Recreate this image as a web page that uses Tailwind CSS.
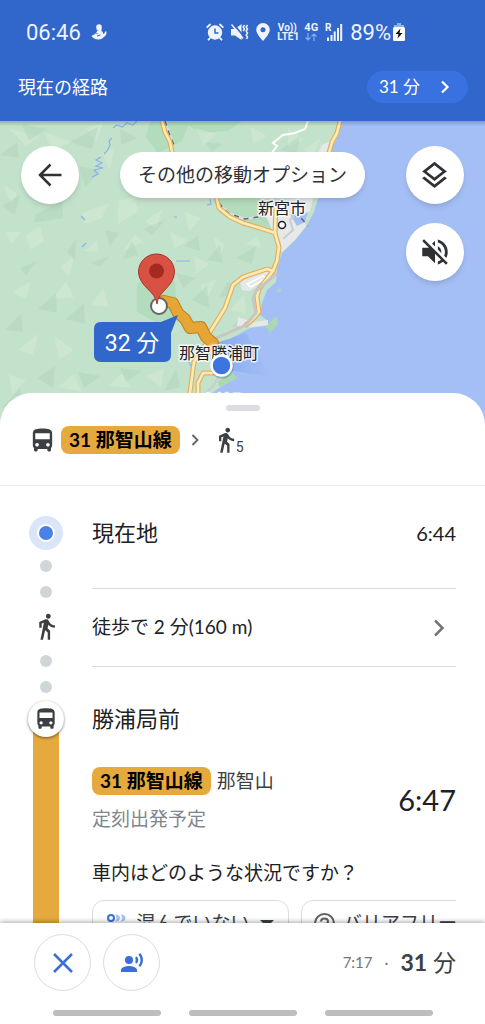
<!DOCTYPE html>
<html lang="ja">
<head>
  <meta charset="UTF-8">
  <meta name="viewport" content="width=device-width, initial-scale=1">
  <title>現在の経路</title>
  <script src="https://cdn.jsdelivr.net/npm/@tailwindcss/browser@4"></script>
</head>
<body class="h-screen flex flex-col overflow-hidden bg-white text-[#202124] font-['Lato','Noto_Sans_CJK_JP',sans-serif]">

  <!-- ENCABEZADO -->
  <header class="shrink-0 bg-[#3166cb] text-white">
    <div class="flex h-16 items-center justify-between pl-[26px] pr-20 font-['Roboto',sans-serif] text-[#eef3ff]">
      <div class="flex items-center gap-2.5">
        <span class="text-[22px]">06:46</span>
        <svg class="size-4" viewBox="0 0 16 16" fill="currentColor"><circle cx="8" cy="3" r="2.8"/><path d="M5.500 4h5v3q2 1 1.500 3 2-.5 2-2.500h1.500q.3 3.500-2.500 5.500Q10 16 7 15.500 3.500 15.500.5 12.500q1-2 3-2L6 7z"/><path d="M6.500 6L4 8.800l2.500.7M6 12l3.500-1" stroke="#3166cb" stroke-width="1" fill="none"/></svg>
      </div>
      <div class="flex items-center gap-[7px]">
        <svg class="size-[18px]" viewBox="0 0 18 18" fill="none" stroke="currentColor" stroke-width="1.800" stroke-linecap="round"><circle cx="9" cy="9.500" r="6.300" fill="currentColor"/><path d="M1.200 4.200L4 1.500M14 1.500l2.800 2.700M4 15l-1.500 1.700M14 15l1.500 1.700"/><path d="M9 6v4h3" stroke="#3166cb" stroke-width="1.500"/></svg>
        <svg class="size-[18px]" viewBox="0 0 18 18" fill="currentColor"><path d="M0 6h4l6.500-5v16L4 12.500H0z"/><path d="M1.500 0l11 13" stroke="#3166cb" stroke-width="1.800"/><path d="M.5 1.500l11.500 14" stroke="currentColor" stroke-width="1.500"/><path d="M13.500 2L12.200 4l1.300 2-1.300 2M16.500 2l-1.300 2 1.300 2-1.300 2 1.300 2-1.300 2 1.300 2-1 2" stroke="currentColor" stroke-width="1.500" fill="none"/></svg>
        <svg class="h-[18px] w-3.5" viewBox="0 0 14 18" fill="currentColor" fill-rule="evenodd"><path d="M7 0a6.800 6.800 0 0 0-6.800 6.800C.2 11 7 18 7 18s6.800-7 6.800-11.200A6.800 6.800 0 0 0 7 0zm0 4.200a2.500 2.500 0 1 1 0 5 2.500 2.500 0 0 1 0-5z"/></svg>
        <span class="flex w-5 flex-col text-center text-[10px] font-bold leading-[9px]"><span>Vo))</span><span>LTE1</span></span>
        <span class="flex flex-col items-center text-[11px] font-bold leading-[10px]">4G
          <svg class="h-2 w-3" viewBox="0 0 12 8" fill="none" stroke="#88aaf0" stroke-width="1.200"><path d="M3 0v7M.5 4.500L3 7l2.500-2.500M9 8V1M6.500 3.500L9 1l2.500 2.500"/></svg>
        </span>
        <svg class="h-[18px] w-[18px]" viewBox="0 0 18 18" fill="currentColor"><path d="M2 14.500h2V18H2zM5.500 12h2v6h-2zM8.700 8.500h2V18h-2zM12 5h2v13h-2zM15.200 1h2v17h-2z"/><text x="0" y="8" font-size="10" font-weight="700">R</text></svg>
        <span class="flex items-center gap-0.5 text-[22px]">89%
          <svg class="h-[18px] w-3" viewBox="0 0 12 18"><path d="M4 0h4v2h3v4H1V2h3z" fill="#91aef0"/><rect y="4" width="12" height="14" rx="1.500" fill="#fff"/><path d="M7.500 5.500L2.500 11h3l-1 4.500L9.500 10h-3z" fill="#111"/></svg>
        </span>
      </div>
    </div>
    <div class="flex h-[57px] items-start justify-between pl-[18px] pr-[17px] pt-[7px]">
      <h1 class="text-lg leading-8">現在の経路</h1>
      <button type="button" class="flex h-8 w-[101px] items-center justify-between rounded-full bg-[#3971e1] pl-3 pr-4 text-[17px]">
        <span>31 分</span>
        <svg class="size-3.5" viewBox="0 0 14 14" fill="none" stroke="currentColor" stroke-width="2.200"><path d="M4 1.500L9.500 7 4 12.500"/></svg>
      </button>
    </div>
  </header>

  <!-- MAPA -->
  <section class="relative -mb-8 h-[304px] shrink-0 overflow-hidden bg-[#a4bff5]">
    <svg class="h-full w-full" viewBox="0 121 485 304" preserveAspectRatio="xMidYMin slice">
      <defs>
        <linearGradient id="haz" x1="0" x2="1"><stop offset="0" stop-color="#3f78ea" stop-opacity=".5"/><stop offset="1" stop-color="#3f78ea" stop-opacity="0"/></linearGradient>
        <linearGradient id="sombra" x1="0" x2="0" y1="0" y2="1"><stop offset="0" stop-color="#203c7a" stop-opacity=".3"/><stop offset="1" stop-color="#203c7a" stop-opacity="0"/></linearGradient>
      </defs>
      <rect y="121" width="485" height="304" fill="#a4bff5"/>
      <!-- tierra -->
      <path fill="#c3e2cb" d="M0 121H341L337 138L330 152L324 175L319 195L314 212L306 227L295 240L282 253L277 268L276 282L267 290L262 303L260 315L268 321L266 326L250 328L230 339L216 343L226 360L234 378L222 386L208 396L205 425H0Z"/>
      <path fill="#a9d8b3" d="M150 121h40l-8 20-24 12-12-16zM214 200l32-5 28 8v28l-30-6-24-12zM137 284l18-8 20 6 2 34-18 8-22-12zM182 121h60l-14 10-28 2z" opacity=".65"/>
      <!-- relieve claro -->
      <path fill="#d6ead4" opacity=".5" d="M8 128l32 8-14 10zM44 132l28 10-20 8zM86 128l18-6-8 20zM102 153l12-4-4 22zM3 185l14 8-5 12zM82 213l27-10-8 16-17 5zM118 201l16-4 5 14-21 13zM25 236l15-10 4 15-13 9zM84 251l14-11 0 12zM122 251l13-17 8 8-17 8zM60 267l15-12-6 22zM5 232l16 0-9 12zM145 221l18-12-7 20zM170 232l18 8-14 9zM185 212l16 6-12 14zM194 256l16 8-14 10zM213 236l12 8-5 14zM200 286l18-8-11 20zM12 292l19-11-5 18zM52 299l14-18 8 17zM91 305l12-17 6 19zM18 350l21-17-6 22zM54 336l20 14-15 10zM9 374l17 6-14 15zM58 387l16-13 8 18zM108 386l14-13 10 15zM146 376l18-8-3 19zM230 310l14-16 2 20zM245 244l12-8 5 12zM195 128l22 6-13 11zM250 126l17 10-14 8zM288 128l16 12-16 7zM303 150l18-12-8 18z"/>
      <!-- relieve oscuro -->
      <path fill="#acd3b7" opacity=".4" d="M22 124l25 5-18 12zM70 142l28-15-6 22zM120 129l17 9-16 7zM0 155l17-13 2 16zM79 166l22 5-16 16zM2 206l18-11-5 20zM36 214l26-13 1 17-30 5zM143 229l22-9-13 15zM105 230l14 3-9 13zM91 263l19-7-10 11zM123 259l9-18 6 14zM67 252l9-13-1 21zM20 268l17-7-11 14zM184 246l14-11 2 16zM207 260l13-15 3 18zM176 273l20 5-13 10zM192 300l15-15 2 23zM219 298l10-18 5 14zM236 258l20-12-4 18zM38 309l18-16 1 20zM66 319l18-16 1 21zM5 330l16-16 2 18zM37 378l18-12-2 22zM78 372l23 4-17 12zM120 368l22 3-16 11zM164 391l12-22 4 18zM2 408l18-20 3 20zM280 150l20-14-3 18zM205 142l17 2-10 8zM258 219l10-8 3 15zM232 326l10-9 0 13z"/>
      <path fill="#a9d8b3" d="M265 326l12-10 1 8-8 9zM277 289l4 0 0 3-4 0zM218 381l14-8 6 5-19 9z"/>
      <!-- zonas urbanas -->
      <path fill="#e6e8ea" d="M264 203l50-8-4 16-9 5 5 10-11 14-13 12-9-20-9-20zM240 282l28-12 8 2-26 19-8-1zM238 317l6 2 10 3 14-2 0 5-15 2-16-1zM322 145l8-4-6 18-10 2z"/>
      <path fill="none" stroke="#fff" stroke-width="1.500" d="M247 284l16-8 3 2-15 9z"/>
      <path fill="#a4bff5" d="M290 214l10 2 8-4-3 10-8 4z"/>
      <!-- rios -->
      <path fill="none" stroke="#8db0ee" stroke-width="1.200" d="M137 121l-4 4-6-2-5 4-5-2-4 3M112 138l-3 3 1 4-3 6-3 3M101 157l-5 3 6 3-6 3 7 2-9 2 4 4-6 3M81 216l4 4M82 247l4-4M174 217h3M176 261h14M207 205l4-1-1-5M188 360l4 8"/>
      <!-- ferrocarril -->
      <g fill="none">
        <path stroke="#d9dde0" stroke-width="2.500" d="M165 121l4 12 5 12M219 203l9 10 17 6 13-2 6-7"/>
        <path stroke="#606a72" stroke-width="1.500" stroke-dasharray="5 5" d="M165 121l4 12 5 12M219 203l9 10 17 6 13-2 6-7M292 214l10 5 6 7"/>
      </g>
      <path fill="none" stroke="#fff" stroke-width="2" d="M308 121l-3 8-10 4-12 2-10 8 4 3-6 8"/>
      <!-- carreteras -->
      <g fill="none" stroke-linejoin="round" stroke-linecap="round">
        <g stroke="#e0b062" stroke-width="5">
          <path d="M162 121l3 11 5 10 3 14M216 196l3 12 11 9 13 6 17 5 15 5"/>
          <path d="M340 121l-3 12-5 9-4 15M276 203l-1 30 4 14-2 14-4 10-6-2-24 8-10 8-8 23-15 24-4 12-12 18-5 38"/>
          <path d="M273 271l-14 18-2 8 2 15-8 9-5 4"/>
          <path d="M213 373h-10l-5 10v16"/>
        </g>
        <g stroke="#fdebb3" stroke-width="2.600">
          <path d="M162 121l3 11 5 10 3 14M216 196l3 12 11 9 13 6 17 5 15 5"/>
          <path d="M340 121l-3 12-5 9-4 15M276 203l-1 30 4 14-2 14-4 10-6-2-24 8-10 8-8 23-15 24-4 12-12 18-5 38"/>
          <path d="M273 271l-14 18-2 8 2 15-8 9-5 4"/>
          <path d="M213 373h-10l-5 10v16"/>
        </g>
        <path stroke="#c9c5bf" stroke-width="3" d="M276 274l-20 17-3 8 3 14-10 12-18 8-14 6"/>
        <path stroke="#c9cdd2" stroke-width="2" d="M284 238l9-8-3-10 9-8M219 376l-5 9-12 12"/>
      </g>
      <path fill="url(#haz)" d="M216 343l30-10 25 44-48-8z" opacity=".6"/>
      <!-- ruta -->
      <g fill="none" stroke-linejoin="round" stroke-linecap="round">
        <path stroke="#b98323" stroke-width="12" d="M164 301l9 2 5 10 7 6 5 9 11-1 5 10 7 6"/>
        <path stroke="#e6a534" stroke-width="10" d="M164 301l9 2 5 10 7 6 5 9 11-1 5 10 7 6"/>
        <path stroke="#e6b56a" stroke-width="8" d="M213 346l5 17" opacity=".7"/>
      </g>
      <g font-family="'Noto Sans CJK JP', sans-serif" font-size="16" fill="#1f2226" stroke="#fff" stroke-opacity=".8" stroke-width="3" stroke-linejoin="round" paint-order="stroke">
        <text x="258" y="214">新宮市</text>
        <text x="179" y="359">那智勝浦町</text>
        <text x="200" y="407">太地町</text>
      </g>
      <circle cx="282" cy="225" r="3.500" fill="#fff" stroke="#202124" stroke-width="1.500"/>
      <circle cx="222" cy="367" r="11.500" fill="#27427a" opacity=".3"/>
      <circle cx="221.500" cy="365.500" r="10" fill="#3c74e0" stroke="#fff" stroke-width="2.500"/>
      <circle cx="159" cy="306" r="8" fill="#fff" stroke="#666" stroke-width="2"/>
      <path fill="#d95142" stroke="#a5352b" d="M157 304c-1-13-18-17-18.500-32a18 18 0 0 1 36 0c-.5 15-16.500 19-17.500 32z"/>
      <circle cx="156.500" cy="271" r="7.500" fill="#a52a22"/>
      <path fill="#3166cb" d="M101 322h60l17-7-7 18v22q0 7-7 7h-63q-7 0-7-7v-26q0-7 7-7z"/>
      <text x="132" y="351" text-anchor="middle" font-family="Roboto, 'Noto Sans CJK JP', sans-serif" font-size="23" fill="#fff">32 分</text>
      <rect y="121" width="485" height="5" fill="url(#sombra)"/>
    </svg>

    <div class="absolute inset-x-0 top-0 flex items-start justify-between px-[21px] pt-[25px] text-[#2f3235]">
      <button type="button" aria-label="戻る" class="grid size-[58px] place-items-center rounded-full bg-white shadow-md">
        <svg class="size-6" viewBox="0 0 24 24" fill="none" stroke="currentColor" stroke-width="2.500"><path d="M23.500 12H2M12.500 1.500L2 12l10.500 10.500"/></svg>
      </button>
      <button type="button" class="mt-1.5 h-[46px] rounded-full bg-white px-[18px] text-[19px] shadow-md">その他の移動オプション</button>
      <div class="flex flex-col gap-[19px]">
        <button type="button" aria-label="レイヤ" class="grid size-[58px] place-items-center rounded-full bg-white shadow-md">
          <svg class="size-[33px]" viewBox="0 0 24 24" fill="currentColor"><path d="M11.990 18.540l-7.370-5.730L3 14.070l9 7 9-7-1.630-1.270-7.380 5.740zM12 16l7.360-5.730L21 9l-9-7-9 7 1.630 1.270L12 16zm0-11.470L17.740 9 12 13.470 6.260 9 12 4.530z"/></svg>
        </button>
        <button type="button" aria-label="ミュート" class="grid size-[58px] place-items-center rounded-full bg-white shadow-md">
          <svg class="size-[34px]" viewBox="0 0 24 24" fill="currentColor"><path d="M16.500 12c0-1.770-1.020-3.290-2.500-4.030v2.210l2.450 2.450c.03-.2.05-.41.05-.63zm2.500 0c0 .94-.2 1.820-.54 2.640l1.510 1.510C20.630 14.910 21 13.500 21 12c0-4.280-2.990-7.860-7-8.770v2.060c2.890.86 5 3.540 5 6.710zM4.270 3L3 4.270 7.730 9H3v6h4l5 5v-6.730l4.250 4.250c-.67.52-1.420.93-2.250 1.180v2.060c1.380-.31 2.630-.95 3.690-1.810L19.730 21 21 19.730l-9-9L4.270 3zM12 4L9.910 6.090 12 8.180V4z"/></svg>
        </button>
      </div>
    </div>
  </section>

  <!-- PANEL -->
  <main class="relative flex min-h-0 flex-1 flex-col overflow-hidden rounded-t-[32px] bg-white">
    <div class="flex h-[93px] shrink-0 flex-col border-b border-[#e8eaed] pt-3">
      <div class="mx-auto h-1.5 w-[34px] rounded-full bg-[#dadce0]"></div>
      <div class="mt-[14px] flex h-[30px] items-center pl-7 text-[#3c4043]">
        <svg class="size-[29px]" viewBox="0 0 24 24" fill="currentColor"><path d="M4 16c0 .88.39 1.670 1 2.220V20c0 .55.45 1 1 1h1c.55 0 1-.45 1-1v-1h8v1c0 .55.45 1 1 1h1c.55 0 1-.45 1-1v-1.780c.61-.55 1-1.340 1-2.220V6c0-3.500-3.580-4-8-4s-8 .5-8 4v10zm3.500 1c-.83 0-1.500-.67-1.500-1.500S6.670 14 7.500 14s1.500.67 1.500 1.500S8.330 17 7.500 17zm9 0c-.83 0-1.500-.67-1.500-1.500s.67-1.500 1.500-1.500 1.500.67 1.500 1.500-.67 1.500-1.500 1.500zm1.500-6H6V6h12v5z"/></svg>
        <span class="ml-1 rounded-lg bg-[#e6a93d] px-2 text-[19px] font-bold leading-7 text-black">31 那智山線</span>
        <svg class="ml-2 size-3.5" viewBox="0 0 14 14" fill="none" stroke="#5f6368" stroke-width="1.800"><path d="M4.500 2L9.500 7l-5 5"/></svg>
        <svg class="ml-2.5 size-7" viewBox="0 0 24 24" fill="currentColor"><path d="M13.500 5.500c1.100 0 2-.9 2-2s-.9-2-2-2-2 .9-2 2 .9 2 2 2zM9.800 8.900L7 23h2.100l1.800-8 2.100 2v6h2v-7.500l-2.100-2 .6-3C14.800 12 16.800 13 19 13v-2c-1.900 0-3.500-1-4.300-2.400l-1-1.600c-.4-.6-1-1-1.700-1-.3 0-.5.1-.8.1L6 8.300V13h2V9.600l1.800-.7"/></svg>
        <span class="-ml-1 mt-3.5 font-['Roboto',sans-serif] text-sm">5</span>
      </div>
    </div>

    <div class="flex min-h-0 flex-1">
      <!-- linea de tiempo -->
      <div class="flex w-[92px] shrink-0 flex-col items-center pt-[30px] text-[#3c4043]">
        <div class="grid size-[34px] shrink-0 place-items-center rounded-full bg-[#dbe5fa]"><div class="size-[18px] rounded-full border-2 border-white bg-[#4b80e8]"></div></div>
        <div class="mt-2.5 size-3 shrink-0 rounded-full bg-[#cfd6d9]"></div>
        <div class="mt-3.5 size-3 shrink-0 rounded-full bg-[#cfd6d9]"></div>
        <svg class="my-3.5 size-[29px] shrink-0" viewBox="0 0 24 24" fill="currentColor"><path d="M13.500 5.500c1.100 0 2-.9 2-2s-.9-2-2-2-2 .9-2 2 .9 2 2 2zM9.800 8.900L7 23h2.100l1.800-8 2.100 2v6h2v-7.500l-2.100-2 .6-3C14.800 12 16.800 13 19 13v-2c-1.900 0-3.500-1-4.300-2.400l-1-1.600c-.4-.6-1-1-1.700-1-.3 0-.5.1-.8.1L6 8.300V13h2V9.600l1.800-.7"/></svg>
        <div class="size-3 shrink-0 rounded-full bg-[#cfd6d9]"></div>
        <div class="mt-3.5 size-3 shrink-0 rounded-full bg-[#cfd6d9]"></div>
        <div class="z-10 mt-2 grid size-9 shrink-0 place-items-center rounded-full bg-white shadow-[0_1px_3px_rgba(0,0,0,0.5)]">
          <svg class="size-[26px]" viewBox="0 0 24 24" fill="currentColor"><path d="M4 16c0 .88.39 1.670 1 2.220V20c0 .55.45 1 1 1h1c.55 0 1-.45 1-1v-1h8v1c0 .55.45 1 1 1h1c.55 0 1-.45 1-1v-1.780c.61-.55 1-1.340 1-2.220V6c0-3.500-3.580-4-8-4s-8 .5-8 4v10zm3.500 1c-.83 0-1.500-.67-1.500-1.500S6.670 14 7.500 14s1.500.67 1.500 1.500S8.330 17 7.500 17zm9 0c-.83 0-1.500-.67-1.500-1.500s.67-1.500 1.500-1.500 1.500.67 1.500 1.500-.67 1.500-1.500 1.500zm1.500-6H6V6h12v5z"/></svg>
        </div>
        <div class="-mt-4 w-[26px] flex-1 bg-[#e6a93d]"></div>
      </div>

      <!-- pasos -->
      <div class="mr-[29px] min-w-0 flex-1 overflow-hidden">
        <div class="flex h-[103px] items-start justify-between border-b border-[#dadce0] pt-[31px] leading-8">
          <h2 class="text-[22px] leading-8">現在地</h2>
          <time class="text-xl leading-8">6:44</time>
        </div>
        <button type="button" class="flex h-[78px] w-full items-center justify-between border-b border-[#dadce0] pr-2 text-[19px]">
          <span>徒歩で 2 分(160 m)</span>
          <svg class="size-[18px]" viewBox="0 0 18 18" fill="none" stroke="#70757a" stroke-width="2.500"><path d="M5 1.500L12.500 9 5 16.500"/></svg>
        </button>
        <h2 class="pt-9 text-[22px] leading-8">勝浦局前</h2>
        <div class="mt-8 flex items-center justify-between">
          <div>
            <p class="flex items-center gap-1.5 text-[19px] leading-7 text-[#3c4043]"><span class="rounded-lg bg-[#e6a93d] px-2 font-bold text-black">31 那智山線</span>那智山</p>
            <p class="mt-2.5 text-[19px] leading-7 text-[#80868b]">定刻出発予定</p>
          </div>
          <time class="text-[29px]">6:47</time>
        </div>
        <p class="mt-[26px] text-[19px] leading-7">車内はどのような状況ですか？</p>
        <div class="mt-[13px] flex gap-3 text-[19px] text-[#3c4043]">
          <button type="button" class="flex h-[46px] w-[197px] shrink-0 items-center justify-between rounded-xl border border-[#dadce0] px-3.5">
            <svg class="h-5 w-[19px]" viewBox="0 0 19 20" fill="none" stroke="#3c71d8" stroke-width="2"><circle cx="4" cy="5" r="3"/><path d="M1 17v-4q3-2 6 0v4z"/><path fill="#a9c1ee" stroke="none" d="M8 1.500q5 0 5 3.500t-5 3.500q3-3.500 0-7zM13.500 1.500q5 0 5 3.500t-5 3.500q3-3.500 0-7zM9 12q4 1 4 6h-3zM15 12q4 1 4 6h-3z"/></svg>
            <span>混んでいない</span>
            <svg class="h-[7px] w-3.5" viewBox="0 0 14 7" fill="currentColor"><path d="M0 0h14L7 7z"/></svg>
          </button>
          <button type="button" class="flex h-[46px] shrink-0 items-center gap-2 rounded-xl border border-[#dadce0] px-3">
            <svg class="size-[21px]" viewBox="0 0 21 21" fill="none" stroke="#5f6368" stroke-width="2"><circle cx="10.500" cy="10.500" r="9.500"/><path d="M7 8.500q0-3 3.500-3t3.500 3q0 1.500-2 2.500-1.500 1-1.500 2.500M10.500 15v2"/></svg>
            <span class="whitespace-nowrap">バリアフリー</span>
          </button>
        </div>
      </div>
    </div>
  </main>

  <!-- BARRA INFERIOR -->
  <footer class="relative h-[101px] shrink-0 bg-white shadow-[0_-1px_5px_rgba(0,0,0,0.35)]">
    <div class="flex items-center justify-between pl-[34px] pr-[29px] pt-[11px]">
      <div class="flex gap-3 text-[#3a70d6]">
        <button type="button" aria-label="終了" class="grid size-[57px] place-items-center rounded-full border border-[#dadce0]">
          <svg class="size-5" viewBox="0 0 20 20" stroke="currentColor" stroke-width="2.500"><path d="M1 1l18 18M19 1L1 19"/></svg>
        </button>
        <button type="button" aria-label="音声" class="grid size-[57px] place-items-center rounded-full border border-[#dadce0]">
          <svg class="size-6" viewBox="0 0 24 24" fill="currentColor"><circle cx="9" cy="9" r="4"/><path d="M9 15c-2.670 0-8 1.340-8 4v2h16v-2c0-2.660-5.330-4-8-4zm7.760-9.640l-1.680 1.690c.84 1.180.84 2.710 0 3.890l1.680 1.690c2.020-2.020 2.020-5.070 0-7.270zM20.070 2l-1.630 1.630c2.770 3.020 2.770 7.560 0 10.740L20.070 16c3.900-3.890 3.910-9.950 0-14z"/></svg>
        </button>
      </div>
      <p class="flex items-center gap-3 text-[15px] text-[#70757a]"><time>7:17</time><span>·</span><span class="text-[23px] text-[#3c4043]"><b>31</b> 分</span></p>
    </div>
    <div class="mt-[19px] flex justify-center gap-7">
      <span class="h-1.5 w-[108px] rounded-full bg-[#bdbdbd]"></span>
      <span class="h-1.5 w-[108px] rounded-full bg-[#bdbdbd]"></span>
      <span class="h-1.5 w-[108px] rounded-full bg-[#bdbdbd]"></span>
    </div>
  </footer>

</body>
</html>
